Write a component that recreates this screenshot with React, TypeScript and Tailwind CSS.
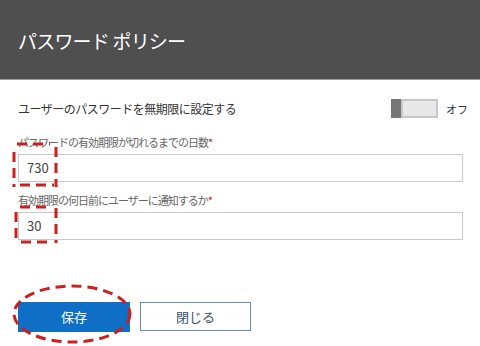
export default function App() {
  return (
    <div className="relative w-[480px] h-[346px] bg-white font-['Noto_Sans_CJK_JP','Noto_Sans',sans-serif] overflow-hidden">
      <div className="h-[80px] bg-[#4f4f4f] border-b border-[#9a9a9a] flex items-center pl-[18px] pt-[2px]">
        <h1 className="text-white text-[19px] leading-6 tracking-[-0.8px]">パスワード ポリシー</h1>
      </div>

      <div className="flex flex-col pl-[18px] pr-[12px]">
        <div className="mt-[19px] h-[19px] flex items-center justify-between">
          <span className="text-[12px] leading-4 text-[#333] tracking-[-0.5px]">ユーザーのパスワードを無期限に設定する</span>
          <div className="flex items-center gap-[8px]">
            <div className="flex h-[19px]">
              <div className="w-[10px] h-full bg-[#767676]" />
              <div className="w-[37px] h-full bg-[#e8e8e8] border-2 border-[#c8c8c8]" />
            </div>
            <span className="text-[11px] leading-4 text-[#333]">オフ</span>
          </div>
        </div>

        <label className="mt-[16px] h-[16px] text-[11px] leading-4 text-[#666] tracking-[-1px]">
          パスワードの有効期限が切れるまでの日数<span className="text-[#a4262c]">*</span>
        </label>
        <div className="mt-[4px] w-[445px] h-[28px] border border-[#c8c8c8] flex items-center px-[8px]">
          <span className="text-[13px] leading-4 text-[#444]">730</span>
        </div>

        <label className="mt-[10px] h-[16px] text-[11px] leading-4 text-[#666] tracking-[-1px]">
          有効期限の何日前にユーザーに通知するか<span className="text-[#a4262c]">*</span>
        </label>
        <div className="mt-[4px] w-[445px] h-[28px] border border-[#c8c8c8] flex items-center px-[8px]">
          <span className="text-[13px] leading-4 text-[#444]">30</span>
        </div>

        <div className="mt-[62px] flex gap-[10px]">
          <button className="w-[112px] h-[30px] bg-[#0f6fc6] text-white text-[13px] leading-4">保存</button>
          <button className="w-[111px] h-[29px] border border-[#6b8aa6] bg-white text-[#35536f] text-[13px] leading-4">閉じる</button>
        </div>
      </div>

      <svg className="absolute inset-0 pointer-events-none" width="480" height="346" viewBox="0 0 480 346">
        <g fill="none" stroke="#cc1f1f" strokeWidth="3" strokeDasharray="10 6">
          <line x1="17" y1="144" x2="50" y2="144" />
          <line x1="56" y1="147" x2="56" y2="187" />
          <line x1="14" y1="152" x2="14" y2="187" />
          <line x1="20" y1="185" x2="54" y2="185" />
          <line x1="20" y1="207" x2="50" y2="207" />
          <line x1="56" y1="208" x2="56" y2="243" />
          <line x1="16" y1="212" x2="16" y2="243" />
          <line x1="21" y1="242" x2="53" y2="242" />
          <ellipse cx="72" cy="314" rx="58" ry="28" />
        </g>
      </svg>
    </div>
  );
}
